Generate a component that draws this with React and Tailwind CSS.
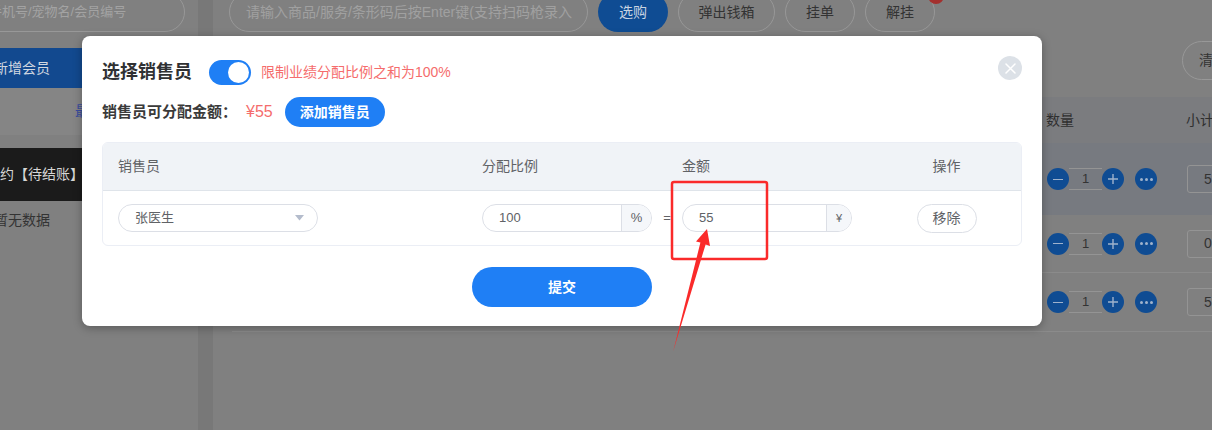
export default function App() {
  const rows = [
    { h: "h-[72px] bg-[#777a80]", total: "55" },
    { h: "h-[58px] border-b border-[#8b8b8b]", total: "0" },
    { h: "h-[59px] border-b border-[#8b8b8b]", total: "5" },
  ];

  return (
    <div className="relative w-[1212px] h-[430px] overflow-hidden bg-[#808080] font-['Liberation_Sans','Noto_Sans_CJK_SC',sans-serif]">
      {/* page behind the dialog (dimmed) */}
      <div className="flex h-full">
        <aside className="w-[198px] shrink-0 overflow-hidden">
          <div className="-mt-2 -ml-[30px] h-10 w-[215px] rounded-full border border-[#989898] flex items-center pl-[18px] text-[13px] text-[#a3a3a3] whitespace-nowrap">
            手机号/宠物名/会员编号
          </div>
          <div className="mt-4 h-10 bg-[#12498f] flex items-center text-[14px] text-[#d2d8e0] whitespace-nowrap">
            <span className="-ml-[6px]">新增会员</span>
          </div>
          <div className="h-[47px] bg-[#858585] flex items-center pl-[75px] text-[14px] text-[#3a4c9e] whitespace-nowrap">
            最近消费
          </div>
          <div className="mt-[13px] h-[53px] bg-[#1b1b1b] flex items-center text-[14px] text-[#d6d6d6] whitespace-nowrap">
            约【待结账】
          </div>
          <div className="mt-[9px] h-5 flex items-center text-[14px] text-[#333] whitespace-nowrap">
            <span className="-ml-[6px]">暂无数据</span>
          </div>
        </aside>
        <div className="w-[15px] shrink-0 bg-[#787878]" />
        <main className="flex-1 overflow-hidden pl-4">
          <div className="w-[1100px]">
            <div className="-mt-2 h-10 flex gap-[10px]">
              <div className="w-[359px] h-10 rounded-full border border-[#989898] flex items-center pl-4 text-[14px] text-[#a0a0a0] whitespace-nowrap overflow-hidden">
                请输入商品/服务/条形码后按Enter键(支持扫码枪录入
              </div>
              <button className="w-[70px] h-10 rounded-full bg-[#0f4c93] text-[14px] text-[#c9d4e2]">选购</button>
              <button className="w-[97px] h-10 rounded-full border border-[#989898] text-[14px] text-[#333]">弹出钱箱</button>
              <button className="w-[70px] h-10 rounded-full border border-[#989898] text-[14px] text-[#333]">挂单</button>
              <button className="relative w-[70px] h-10 rounded-full border border-[#989898] text-[14px] text-[#333]">
                解挂
                <span className="absolute -right-[10px] -top-[5px] w-4 h-4 rounded-full bg-[#a3302e]" />
              </button>
            </div>
            <div className="mt-[9px] flex justify-end pr-[77px]">
              <button className="w-[70px] h-[39px] rounded-full border border-[#989898] text-[14px] text-[#333] text-left pl-4">清空</button>
            </div>
            <div className="mt-[17px] ml-[3px]">
              <div className="h-[46px] bg-[#7b7c7f] grid grid-cols-[1fr_140px_143px] items-center text-[14px] text-[#2f2f2f]">
                <span className="pl-5">商品名称</span>
                <span>数量</span>
                <span>小计</span>
              </div>
              {rows.map((r, i) => (
                <div key={i} className={`grid grid-cols-[1fr_140px_143px] items-center ${r.h}`}>
                  <span />
                  <div className="flex items-center">
                    <span className="ml-px w-[22px] h-[22px] rounded-full bg-[#0f4c93] flex items-center justify-center">
                      <span className="w-[10px] h-px bg-[#9fb2cc]" />
                    </span>
                    <span className="w-[33px] h-[22px] border-y border-[#949494] flex items-center justify-center text-[13px] text-[#333]">1</span>
                    <span className="w-[22px] h-[22px] rounded-full bg-[#0f4c93] flex items-center justify-center">
                      <svg width="12" height="12" viewBox="0 0 12 12" fill="none" stroke="#9fb2cc" strokeWidth="1.4">
                        <path d="M6 1v10M1 6h10" />
                      </svg>
                    </span>
                    <span className="ml-[11px] w-[22px] h-[22px] rounded-full bg-[#0f4c93] flex items-center justify-center gap-[2px]">
                      <span className="w-[3px] h-[3px] rounded-full bg-[#9fb2cc]" />
                      <span className="w-[3px] h-[3px] rounded-full bg-[#9fb2cc]" />
                      <span className="w-[3px] h-[3px] rounded-full bg-[#9fb2cc]" />
                    </span>
                  </div>
                  <div className="ml-px w-[80px] h-7 rounded-[3px] border border-[#949494] flex items-center pl-4 text-[14px] text-[#333]">
                    {r.total}
                  </div>
                </div>
              ))}
            </div>
          </div>
        </main>
      </div>

      {/* dialog */}
      <div className="absolute left-[82px] top-[36px] w-[960px] h-[290px] bg-white rounded-lg shadow-[0_2px_10px_rgba(0,0,0,0.3)] px-5 pt-[23px]">
        <button className="absolute right-5 top-5 w-6 h-6 rounded-full bg-[#dce1e7] flex items-center justify-center">
          <svg width="11" height="11" viewBox="0 0 11 11" fill="none" stroke="#fff" strokeWidth="1.5" strokeLinecap="round">
            <path d="M1 1l9 9M10 1l-9 9" />
          </svg>
        </button>

        <div className="flex items-center h-[26px]">
          <h2 className="text-[18px] font-bold text-[#303133]">选择销售员</h2>
          <div className="ml-[17px] w-[42px] h-[25px] rounded-full bg-[#1f7ff5] p-[2px] flex justify-end">
            <span className="w-[21px] h-[21px] rounded-full bg-white" />
          </div>
          <span className="ml-[10px] text-[14px] text-[#f56c6c]">限制业绩分配比例之和为100%</span>
        </div>

        <div className="mt-3 h-[30px] flex items-center">
          <span className="text-[15px] font-bold text-[#3a3a3a]">销售员可分配金额：</span>
          <span className="ml-[9px] text-[16px] text-[#f56c6c]">¥55</span>
          <button className="ml-3 h-[30px] px-[15px] rounded-full bg-[#1f7ff5] text-[14px] font-bold text-white">添加销售员</button>
        </div>

        <div className="mt-[15px] border border-[#ebeef5] rounded-md overflow-hidden">
          <div className="h-12 bg-[#f0f3f7] border-b border-[#dfe4ea] flex items-center text-[14px] text-[#606266]">
            <span className="w-[364px] pl-[15px]">销售员</span>
            <span className="w-[215px] pl-[15px]">分配比例</span>
            <span className="w-[190px]">金额</span>
            <span className="flex-1 text-center">操作</span>
          </div>
          <div className="h-[54px] flex items-center text-[13px] text-[#606266]">
            <div className="w-[364px] pl-[15px]">
              <div className="w-[200px] h-7 rounded-full border border-[#dcdfe6] flex items-center justify-between pl-4 pr-[13px]">
                <span>张医生</span>
                <svg width="9" height="6" viewBox="0 0 9 6">
                  <path d="M0 0h9L4.5 5.5z" fill="#b4bccc" />
                </svg>
              </div>
            </div>
            <div className="w-[215px] pl-[15px] flex items-center">
              <div className="w-[170px] h-7 rounded-full border border-[#dcdfe6] flex overflow-hidden">
                <span className="flex-1 flex items-center pl-4">100</span>
                <span className="w-[30px] bg-[#f5f7fa] border-l border-[#dcdfe6] flex items-center justify-center">%</span>
              </div>
              <span className="flex-1 text-center">=</span>
            </div>
            <div className="w-[190px]">
              <div className="w-[170px] h-7 rounded-full border border-[#dcdfe6] flex overflow-hidden">
                <span className="flex-1 flex items-center pl-4">55</span>
                <span className="w-[25px] bg-[#f5f7fa] border-l border-[#dcdfe6] flex items-center justify-center text-[11px]">¥</span>
              </div>
            </div>
            <div className="flex-1 flex justify-center">
              <button className="w-[60px] h-[29px] rounded-full border border-[#dcdfe6] text-[14px] text-[#606266]">移除</button>
            </div>
          </div>
        </div>

        <div className="mt-[21px] flex justify-center">
          <button className="w-[180px] h-10 rounded-full bg-[#1f7ff5] text-[14px] font-bold text-white">提交</button>
        </div>
      </div>

      {/* screenshot annotation */}
      <svg className="absolute inset-0 pointer-events-none" width="1212" height="430" viewBox="0 0 1212 430">
        <rect x="672" y="182" width="95" height="77" rx="2" fill="none" stroke="#fa2a2a" strokeWidth="2.5" />
        <polygon points="707,229 710,246 705.6,244.4 673,352 700.4,242.6 696,241.4" fill="#fa2a2a" />
      </svg>
    </div>
  );
}
